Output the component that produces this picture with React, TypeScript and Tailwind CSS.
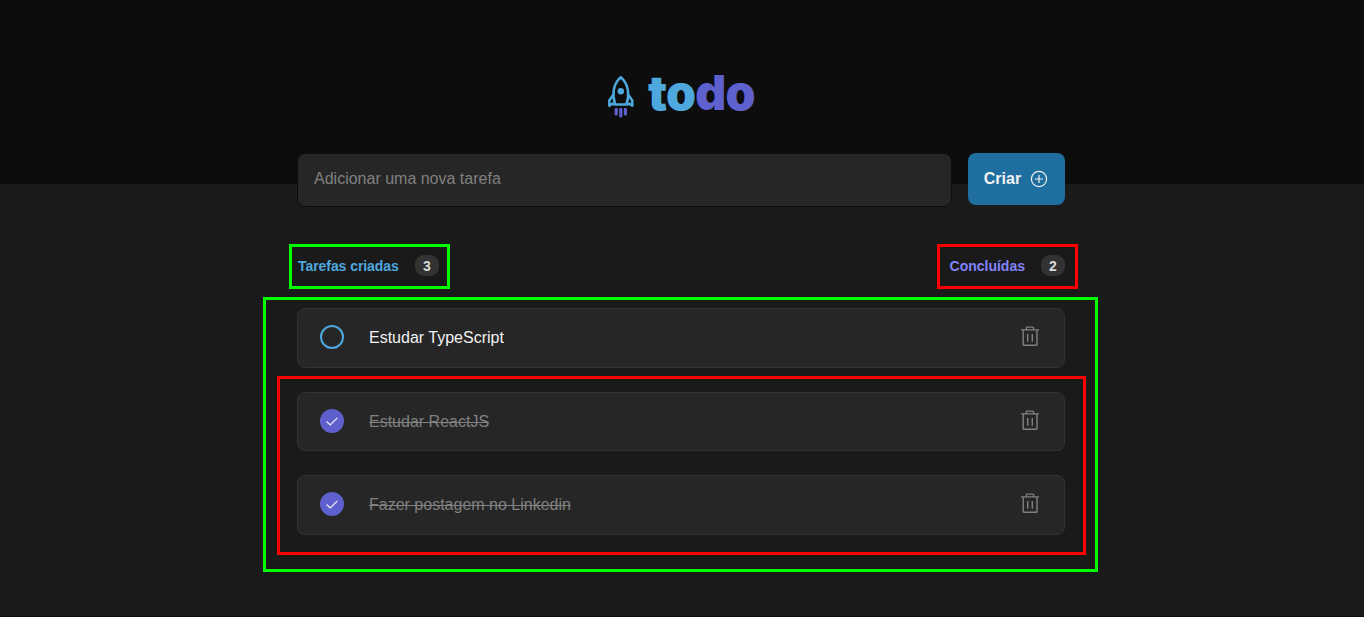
import { useState } from "react";

type Task = { id: number; title: string; done: boolean; box: string };

const initialTasks: Task[] = [
  { id: 1, title: "Estudar TypeScript", done: false, box: "h-[60px]" },
  { id: 2, title: "Estudar ReactJS", done: true, box: "h-[59px]" },
  { id: 3, title: "Fazer postagem no Linkedin", done: true, box: "h-[60px]" },
];

function Rocket() {
  return (
    <svg width="28" height="44" viewBox="0 0 28 44" fill="none">
      <g stroke="#4ea8de" strokeWidth="2.5" strokeLinejoin="round">
        <path d="M8.200 29.400C5.200 21 5.400 9.500 13.800 2.300c8.400 7.200 8.600 18.700 5.600 27.100z" />
        <path d="M6.200 20L2.300 25.400v5.400l3.200-2.200 2.400 1.200M21.400 20l3.900 5.400v5.400l-3.200-2.200-2.400 1.200" />
      </g>
      <circle cx="13.800" cy="16.200" r="3.200" fill="#4ea8de" />
      <path d="M9.200 34.400v4.600M13.800 34.400v6.600M18.400 34.400v4.600" stroke="#5e60ce" strokeWidth="3.200" strokeLinecap="round" />
    </svg>
  );
}

function PlusCircle() {
  return (
    <svg width="18" height="18" viewBox="0 0 18 18" fill="none" stroke="#f2f2f2" strokeWidth="1.2">
      <circle cx="9" cy="9" r="7.600" />
      <path d="M9 5v8M5 9h8" />
    </svg>
  );
}

function Trash() {
  return (
    <svg width="18" height="20" viewBox="0 0 18 20" fill="none" stroke="#808080" strokeWidth="1.400">
      <path d="M0 3.900h18M5.400 3.900V2q0-.9.900-.9h5.400q.9 0 .9.900v1.900" />
      <path d="M2.200 3.900v14.500q0 .9.900.9h12q.9 0 .9-.9V3.900M6.700 8v7.700M11.300 8v7.700" />
    </svg>
  );
}

function Check() {
  return (
    <svg width="12" height="9" viewBox="0 0 12 9" fill="none" stroke="#f2f2f2" strokeWidth="1.200">
      <path d="M.6 4.500L4.200 8 11.400.8" />
    </svg>
  );
}

function Counter({ label, value, tone }: { label: string; value: number; tone: string }) {
  return (
    <div className="flex items-center gap-4">
      <span className={`pt-[2px] text-[14px] leading-[19px] font-bold ${tone}`}>{label}</span>
      <span className="flex h-[21px] w-6 items-center justify-center rounded-[9px] bg-[#333333] pt-[2px] text-[14px] leading-[19px] font-bold text-[#d9d9d9]">
        {value}
      </span>
    </div>
  );
}

export default function App() {
  const [tasks, setTasks] = useState(initialTasks);
  const toggle = (id: number) =>
    setTasks((list) => list.map((t) => (t.id === id ? { ...t, done: !t.done } : t)));
  const remove = (id: number) => setTasks((list) => list.filter((t) => t.id !== id));

  return (
    <div className="h-[617px] overflow-hidden border-b border-[#0d0d0d] bg-[#1a1a1a] font-['Liberation_Sans',Arial,sans-serif] text-base text-[#f2f2f2]">
      <header className="flex h-[184px] justify-center bg-[#0d0d0d] pt-[75px]">
        <div className="flex h-11 w-[150px] items-start gap-[13px]">
          <Rocket />
          <h1 className="-mt-[10px] font-['Inter',sans-serif] text-[48px] leading-[56px] font-black tracking-[-0.700px] text-[#4ea8de]">
            to<span className="text-[#5e60ce]">do</span>
          </h1>
        </div>
      </header>

      <main className="mx-auto -mt-[31px] w-[768px] -translate-x-px">
        <form className="flex justify-between" onSubmit={(e) => e.preventDefault()}>
          <input
            className="h-[54px] w-[655px] rounded-lg border border-[#0d0d0d] bg-[#262626] px-4 pb-[2px] outline-none placeholder:text-[#808080] placeholder:opacity-100"
            placeholder="Adicionar uma nova tarefa"
          />
          <button className="flex h-[52px] w-[97px] items-center justify-center gap-[9px] rounded-lg bg-[#1e6f9f] pr-px font-bold">
            Criar
            <PlusCircle />
          </button>
        </form>

        <div className="mt-12 flex justify-between pl-px">
          <div className="relative">
            <Counter label="Tarefas criadas" value={tasks.length} tone="text-[#4ea8de] tracking-[-0.060px]" />
            <div className="pointer-events-none absolute -top-[11px] -left-[9px] h-[45px] w-[161px] border-3 border-[#00ff00]" />
          </div>
          <div className="relative">
            <Counter label="Concluídas" value={tasks.filter((t) => t.done).length} tone="text-[#8284fa]" />
            <div className="pointer-events-none absolute -top-[11px] -right-[13px] h-[45px] w-[141px] border-3 border-[#ff0000]" />
          </div>
        </div>

        <section className="relative mt-8">
          <ul className="flex flex-col gap-6">
            {tasks.map((task) => (
              <li
                key={task.id}
                className={`flex items-start rounded-lg border border-[#333333] bg-[#262626] pr-[25px] pl-[22px] pt-4 ${task.box}`}
              >
                <button
                  onClick={() => toggle(task.id)}
                  className={
                    task.done
                      ? "flex size-6 items-center justify-center rounded-full bg-[#5e60ce]"
                      : "size-6 rounded-full border-2 border-[#4ea8de]"
                  }
                >
                  {task.done && <Check />}
                </button>
                <p className={task.done ? "mt-px ml-[25px] flex-1 text-[#808080] line-through" : "mt-px ml-[25px] flex-1"}>
                  {task.title}
                </p>
                <button onClick={() => remove(task.id)} className="mt-px">
                  <Trash />
                </button>
              </li>
            ))}
          </ul>
          <div className="pointer-events-none absolute -top-[11px] -left-[34px] h-[275px] w-[835px] border-3 border-[#00ff00]" />
          <div className="pointer-events-none absolute top-[68px] -left-[20px] h-[179px] w-[809px] border-3 border-[#ff0000]" />
        </section>
      </main>
    </div>
  );
}
